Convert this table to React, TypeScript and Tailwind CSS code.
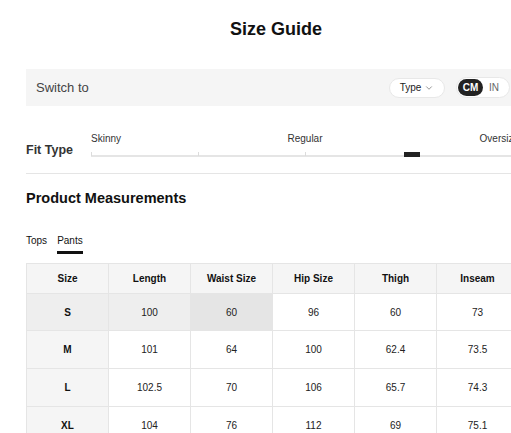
import { ChevronDown } from "lucide-react";

const headers = ["Size", "Length", "Waist Size", "Hip Size", "Thigh", "Inseam"];

const rows = [
  ["S", "100", "60", "96", "60", "73"],
  ["M", "101", "64", "100", "62.4", "73.5"],
  ["L", "102.5", "70", "106", "65.7", "74.3"],
  ["XL", "104", "76", "112", "69", "75.1"],
];

export default function App() {
  return (
    <div className="w-full h-[433px] overflow-hidden bg-white text-[#222] font-['Liberation_Sans',Arial,sans-serif]">
      <div className="ml-[26px] w-[500px]">
        <h1 className="pt-[18px] text-center text-[18px] leading-[22px] font-bold text-[#111]">
          Size Guide
        </h1>

        {/* unit switch bar */}
        <div className="mt-[29px] h-[37px] flex items-center bg-[#f5f5f5] pl-[10px] pr-[16px]">
          <span className="text-[13px] text-[#444]">Switch to</span>
          <div className="ml-auto flex items-center gap-[11px]">
            <button className="h-[20px] w-[56px] flex items-center justify-center gap-[3px] rounded-full bg-white border border-[#e8e8e8] text-[10px] text-[#222]">
              Type
              <ChevronDown size={10} strokeWidth={1.5} className="text-[#555]" />
            </button>
            <div className="h-[21px] w-[54px] flex items-center rounded-full bg-white border border-[#e8e8e8] px-[1px]">
              <span className="h-[17px] w-[25px] flex items-center justify-center rounded-full bg-[#222] text-white text-[10px] font-bold">
                CM
              </span>
              <span className="ml-[6px] text-[10px] text-[#666]">IN</span>
            </div>
          </div>
        </div>

        {/* fit type slider */}
        <div className="mt-[27px] flex items-start">
          <div className="w-[65px] pt-[9px] text-[12.5px] leading-[16px] font-bold text-[#333]">
            Fit Type
          </div>
          <div className="w-[428px]">
            <div className="grid grid-cols-3 text-[10px] leading-[12px] text-[#333]">
              <span className="text-left">Skinny</span>
              <span className="text-center">Regular</span>
              <span className="text-right">Oversize</span>
            </div>
            <div className="relative mt-[10px] h-[2px] bg-[#e5e5e5]">
              <span className="absolute left-0 top-[-3px] h-[4px] w-px bg-[#dcdcdc]" />
              <span className="absolute left-[107px] top-[-3px] h-[4px] w-px bg-[#dcdcdc]" />
              <span className="absolute left-[214px] top-[-3px] h-[4px] w-px bg-[#dcdcdc]" />
              <span className="absolute left-[313px] top-[-3px] h-[5px] w-[16px] bg-[#222]" />
            </div>
          </div>
        </div>

        <div className="mt-[15px] h-px bg-[#e5e5e5]" />

        <h2 className="mt-[15px] text-[14.5px] leading-[18px] font-bold text-[#111]">
          Product Measurements
        </h2>

        {/* tabs */}
        <div className="mt-[27px] flex gap-[10px] text-[10px] leading-[13px] text-[#111]">
          <span>Tops</span>
          <span className="border-b-[3px] border-[#111] pb-[4px]">Pants</span>
        </div>

        <table className="mt-[9px] border-collapse table-fixed text-[10px] text-[#222]">
          <thead>
            <tr className="h-[30px] bg-[#f5f5f5]">
              {headers.map((h) => (
                <th key={h} className="w-[82px] border border-[#e5e5e5] font-bold text-[#111]">
                  {h}
                </th>
              ))}
            </tr>
          </thead>
          <tbody>
            {rows.map((row, r) => (
              <tr key={row[0]} className={r === 0 ? "h-[37px]" : "h-[38px]"}>
                {row.map((cell, c) => {
                  let bg = "bg-white";
                  if (c === 0) bg = "bg-[#f5f5f5]";
                  if (r === 0 && c < 2) bg = "bg-[#eeeeee]";
                  if (r === 0 && c === 2) bg = "bg-[#e5e5e5]";
                  return (
                    <td
                      key={c}
                      className={`border border-[#e5e5e5] text-center ${bg} ${c === 0 ? "font-bold text-[#111]" : ""}`}
                    >
                      {cell}
                    </td>
                  );
                })}
              </tr>
            ))}
          </tbody>
        </table>
      </div>
    </div>
  );
}
